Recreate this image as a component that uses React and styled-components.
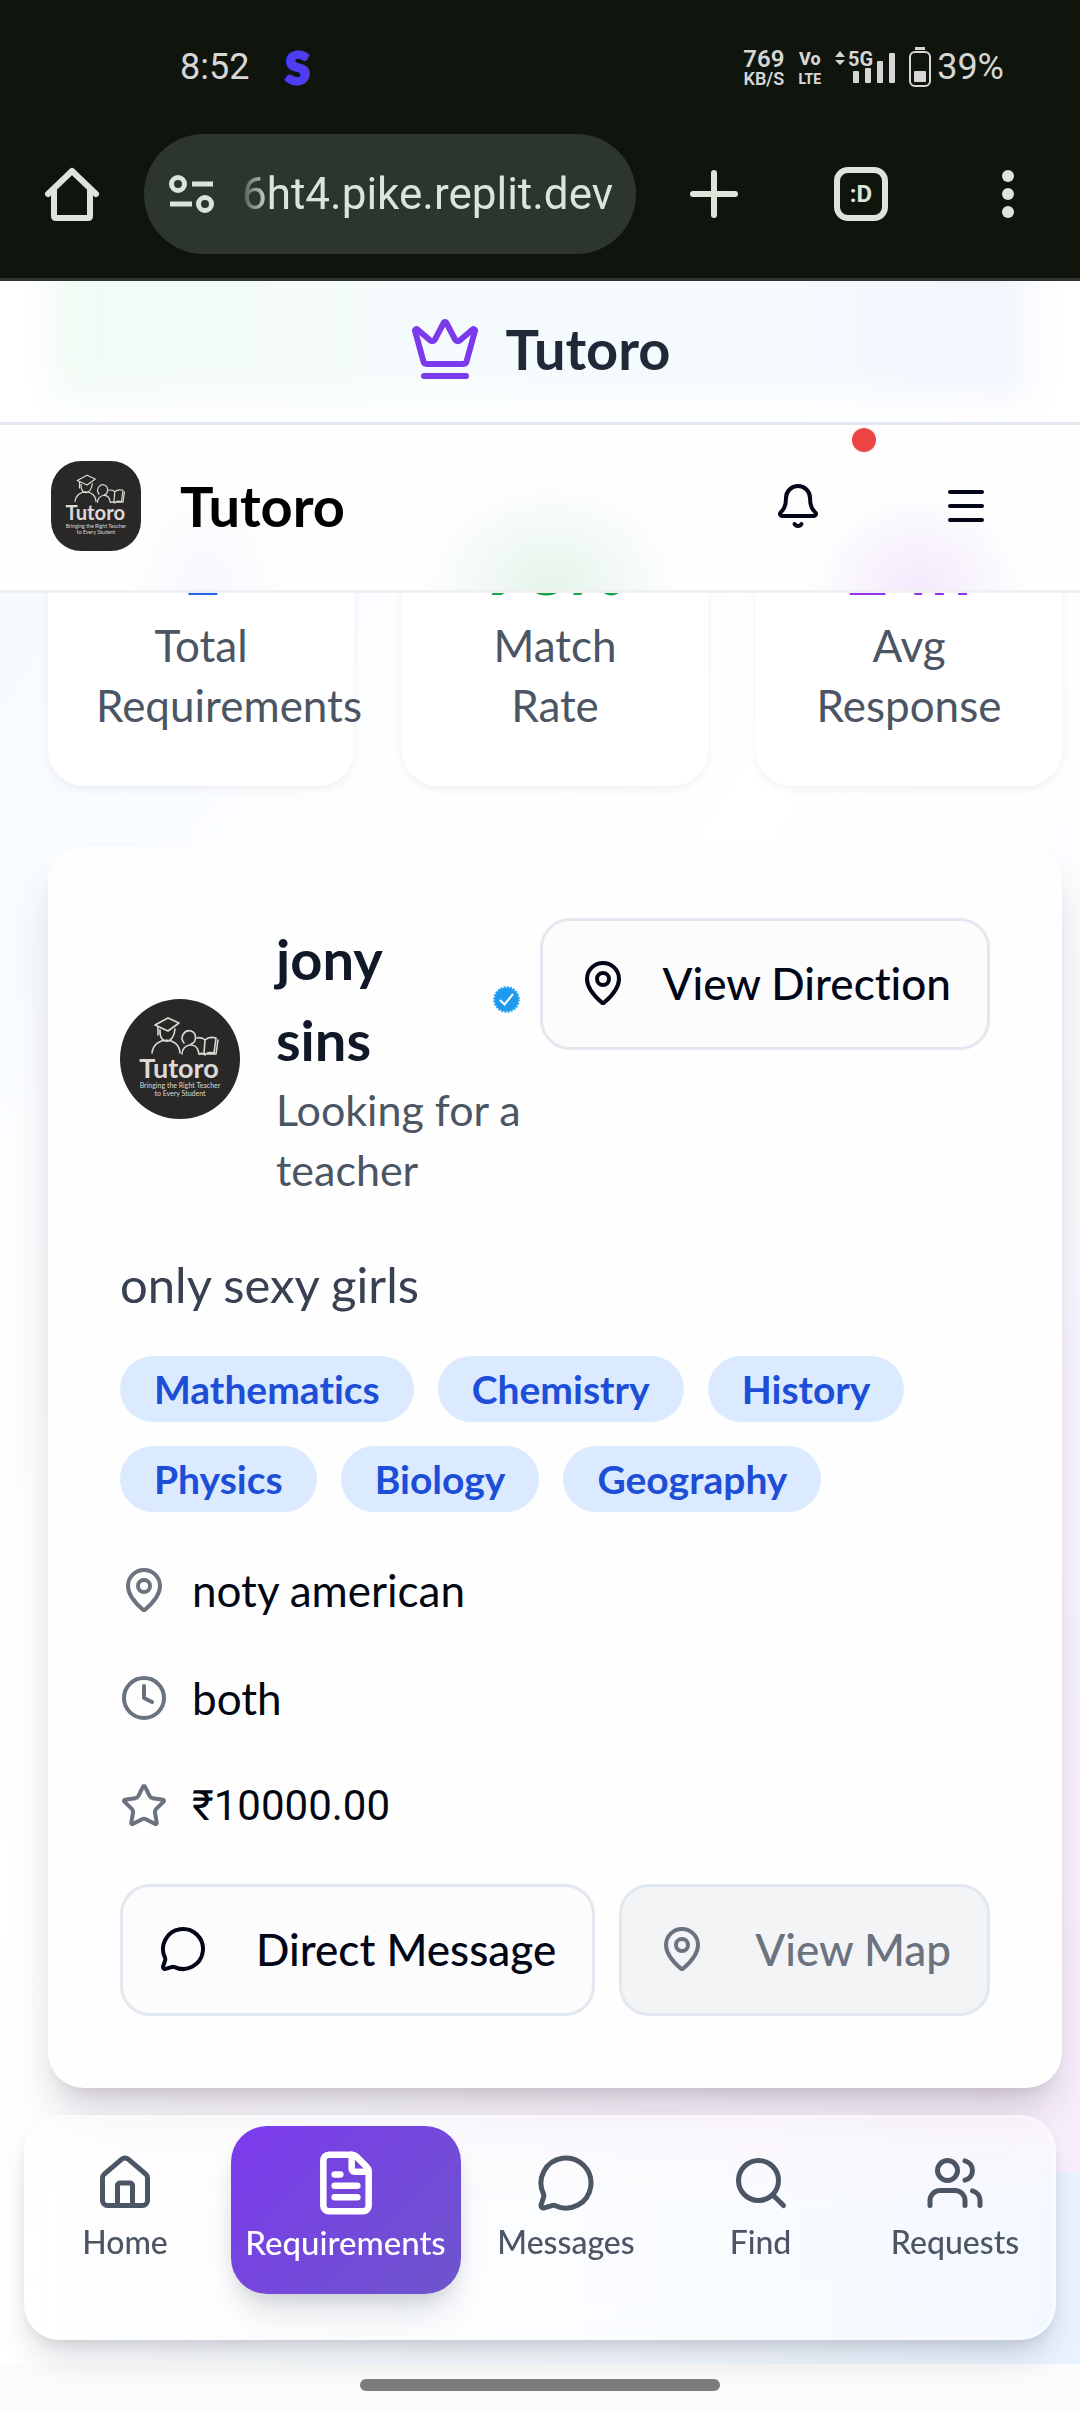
import React from "react";
import styled, { createGlobalStyle, css } from "styled-components";
import {
  Bell,
  Clock,
  Crown,
  FileText,
  House,
  MapPin,
  Menu,
  MessageCircle,
  Search,
  Star,
  Users,
} from "lucide-react";

const GlobalStyle = createGlobalStyle`
  *, *::before, *::after { box-sizing: border-box; }
  body { margin: 0; background: #fcfcfc; }
  button { font: inherit; color: inherit; background: none; border: 0; padding: 0; cursor: pointer; }
  h1, h2, p, ul, dl, dd, dt { margin: 0; padding: 0; }
  svg { display: block; flex: none; }
`;

const Screen = styled.div`
  font-family: Lato, "Open Sans", sans-serif;
  font-size: 43px;
  line-height: 60px;
  font-variant-ligatures: none;
  color: #030712;
  overflow: hidden;
`;

/* ---------- device chrome ---------- */

const Chrome = styled.div`
  background: #0f150d;
  border-bottom: 3px solid #2d342e;
  font-family: Roboto, sans-serif;
`;

const StatusBar = styled.div`
  display: flex;
  align-items: center;
  justify-content: space-between;
  height: 134px;
  padding: 0 76px 0 180px;
  color: #d6d6d6;
  font-size: 36px;
  line-height: 40px;
`;

const StatusGroup = styled.div`
  display: flex;
  align-items: center;
  gap: ${(p) => p.$gap}px;
`;

const AppMark = styled.span`
  font-family: Lato, sans-serif;
  font-weight: 900;
  font-size: 44px;
  color: #4f3df0;
  -webkit-text-stroke: 3px #4f3df0;
`;

const Stacked = styled.span`
  display: flex;
  flex-direction: column;
  align-items: center;
  padding-top: 4px;
  font-weight: ${(p) => p.$weight};
  font-size: ${(p) => p.$size}px;
  line-height: 20px;
  small { font-size: ${(p) => p.$small}px; }
`;

const Toolbar = styled.div`
  display: flex;
  align-items: center;
  padding: 0 36px 24px;
  color: #dbe5d9;
`;

const ChromeButton = styled.button`
  display: flex;
  align-items: center;
  justify-content: center;
  width: 72px;
  height: 72px;
  flex: none;
`;

const ChromeActions = styled.div`
  display: flex;
  gap: 75px;
`;

const AddressBar = styled.label`
  display: flex;
  align-items: center;
  gap: 26px;
  flex: 1;
  min-width: 0;
  height: 120px;
  margin: 0 42px 0 36px;
  padding: 0 12px 0 24px;
  border-radius: 60px;
  background: #2d362e;
`;

const AddressInput = styled.input`
  flex: 1;
  min-width: 0;
  border: 0;
  padding: 0;
  outline: 0;
  background: none;
  color: inherit;
  font: 44px/60px Roboto, sans-serif;
  mask-image: linear-gradient(90deg, rgba(0, 0, 0, 0.2), #000 28px);
`;

const TabCount = styled.span`
  display: flex;
  align-items: center;
  justify-content: center;
  width: 54px;
  height: 54px;
  border: 6px solid currentColor;
  border-radius: 14px;
  font-size: 24px;
  font-weight: 700;
`;

/* ---------- app headers ---------- */

const BrandBar = styled.header`
  position: relative;
  display: flex;
  align-items: center;
  justify-content: center;
  gap: 24px;
  height: 144px;
  padding-bottom: 6px;
  border-bottom: 3px solid #e2e8f0;
  background: #fff;
  overflow: hidden;
  color: #7c3aed;
  &::before {
    content: "";
    position: absolute;
    inset: -60px 52px 24px;
    background: linear-gradient(90deg, #f1fbf4, #f5fbfc 35%, #f5faff 75%, #f1f5fd);
    filter: blur(18px);
  }
  > * { position: relative; }
`;

const BrandName = styled.h1`
  font-size: 56px;
  line-height: 72px;
  font-weight: 700;
  color: ${(p) => p.$color};
`;

const AppBar = styled.header`
  position: relative;
  z-index: 2;
  display: flex;
  align-items: center;
  height: 168px;
  padding: 0 42px 4px 51px;
  border-bottom: 3px solid #eff0f2;
  background:
    radial-gradient(80px 110px at 19% 100%, rgba(37, 99, 235, 0.04), transparent),
    radial-gradient(130px 110px at 51% 100%, rgba(22, 163, 74, 0.11), transparent),
    radial-gradient(110px 100px at 85% 100%, rgba(147, 51, 234, 0.1), transparent),
    #fefefe;
  color: #020617;
  ${BrandName} { flex: 1; margin-left: 39px; }
`;

const AppBarButtons = styled.div`
  display: flex;
  gap: 24px;
`;

const IconButton = styled.button`
  position: relative;
  display: flex;
  align-items: center;
  justify-content: center;
  width: 144px;
  height: 144px;
`;

const Alert = styled.span`
  position: absolute;
  top: -6px;
  right: -6px;
  width: 24px;
  height: 24px;
  border-radius: 50%;
  background: #ef4444;
`;

const LogoBox = styled.span`
  flex: none;
  width: ${(p) => p.$size}px;
  height: ${(p) => p.$size}px;
  border-radius: ${(p) => p.$radius};
  overflow: hidden;
  svg { width: 100%; height: 100%; }
`;

/* ---------- content ---------- */

const Page = styled.div`
  background:
    linear-gradient(90deg, #ffffff 0%, #f6faff 60%, #e9f2ff 100%) bottom / 100% 192px no-repeat,
    linear-gradient(125deg, #f3faff 0%, #fbfdff 20%, #ffffff 42%, #fcfaff 62%, #f7ecfd 100%);
  padding-bottom: 24px;
`;

const Content = styled.main`
  padding: 0 18px 0 48px;
`;

const Stats = styled.dl`
  display: grid;
  grid-template-columns: repeat(3, minmax(0, 1fr));
  gap: 48px;
  margin-top: -125px;
`;

const StatCard = styled.div`
  display: flex;
  flex-direction: column-reverse;
  padding: 48px 45px;
  border: 3px solid #fff;
  border-radius: 36px;
  background: rgba(255, 255, 255, 0.9);
  box-shadow: 0 3px 9px rgba(15, 23, 42, 0.06);
  text-align: center;
  dt { color: #4b5563; font-size: 44px; }
  dd {
    font-size: 72px;
    line-height: 96px;
    font-weight: 700;
    color: ${(p) => p.$color};
  }
`;

const Card = styled.article`
  margin-top: 60px;
  padding: 72px;
  border-radius: 36px;
  background: #fefefe;
  box-shadow: 0 30px 45px -9px rgba(30, 10, 30, 0.18), 0 12px 18px -12px rgba(30, 10, 30, 0.14);
`;

const CardHead = styled.div`
  display: flex;
  align-items: flex-start;
  gap: 14px;
`;

const Person = styled.div`
  display: flex;
  align-items: center;
  gap: 36px;
  flex: 1;
  min-width: 0;
`;

const PersonText = styled.div`
  flex: 1;
  min-width: 0;
  color: #4b5563;
`;

const NameRow = styled.div`
  display: flex;
  align-items: center;
  gap: 24px;
  padding-right: 6px;
  h2 {
    flex: 1;
    font-size: 56px;
    line-height: 81px;
    font-weight: 700;
    color: #111827;
  }
`;

const Note = styled.p`
  margin-top: 48px;
  font-size: 49px;
  line-height: 72px;
  color: #374151;
`;

const Tags = styled.ul`
  display: flex;
  flex-wrap: wrap;
  gap: 24px;
  margin-top: 36px;
  list-style: none;
`;

const Tag = styled.li`
  padding: 9px 34px;
  border-radius: 33px;
  background: #dbeafe;
  color: #1d4ed8;
  font-size: 39px;
  line-height: 48px;
  font-weight: 700;
`;

const Facts = styled.ul`
  display: flex;
  flex-direction: column;
  gap: 48px;
  margin: 48px 0;
  list-style: none;
  font-size: 44px;
`;

const Fact = styled.li`
  display: flex;
  align-items: center;
  gap: 24px;
  svg { color: #6b7280; }
  ${(p) => p.$numeric && css`font-family: Roboto, sans-serif; font-size: 42px;`}
`;

const ActionRow = styled.div`
  display: flex;
  gap: 24px;
`;

const OutlineButton = styled.button`
  display: flex;
  align-items: center;
  justify-content: space-between;
  gap: ${(p) => p.$gap || 36}px;
  flex: ${(p) => (p.$grow ? "1 1 auto" : "none")};
  height: 132px;
  padding: 0 36px 2px;
  border: 3px solid #e2e8f0;
  border-radius: 30px;
  background: #fcfcfd;
  color: #020617;
  font-weight: 500;
  font-size: 44px;
  white-space: nowrap;
  &:disabled { background: #f3f4f6; color: #6b7280; cursor: default; }
`;

/* ---------- bottom navigation ---------- */

const BottomNav = styled.nav`
  display: flex;
  justify-content: space-between;
  height: 225px;
  margin: 27px 24px 0;
  padding: 8px 9px;
  border: 3px solid rgba(255, 255, 255, 0.3);
  border-radius: 36px;
  background: rgba(255, 255, 255, 0.45);
  backdrop-filter: blur(24px);
  box-shadow: 0 24px 36px -9px rgba(15, 23, 42, 0.16), 0 6px 15px -3px rgba(15, 23, 42, 0.1);
`;

const NavItem = styled.a`
  display: flex;
  flex-direction: column;
  align-items: center;
  min-width: ${(p) => (p.$active ? 230 : 178)}px;
  height: 168px;
  padding-top: 22px;
  border-radius: 36px;
  color: #4b5563;
  font-size: 32px;
  line-height: 48px;
  font-weight: 500;
  text-decoration: none;
  ${(p) => p.$active && css`
    color: #fff;
    font-size: 33px;
    background: linear-gradient(135deg, #7c3aed, #6d55cc);
    box-shadow: 0 24px 36px -9px rgba(15, 23, 42, 0.14), 0 9px 18px -6px rgba(15, 23, 42, 0.12);
  `}
`;

const NavIcon = styled.span`
  display: flex;
  align-items: center;
  height: 70px;
`;

const GestureBar = styled.footer`
  display: flex;
  align-items: center;
  justify-content: center;
  height: 48px;
  padding-bottom: 6px;
  background: #fcfcfc;
  &::before {
    content: "";
    width: 360px;
    height: 12px;
    border-radius: 6px;
    background: #7d7d7d;
  }
`;

/* ---------- drawings ---------- */

const TutoroLogo = () => (
  <svg viewBox="0 0 120 120" role="img" aria-label="Tutoro logo">
    <rect width="120" height="120" fill="#292827" />
    <g fill="none" stroke="#dcdad6" strokeWidth="1.6" strokeLinejoin="round" strokeLinecap="round">
      <path d="M35 26l13-7 11 5-11 8z" />
      <path d="M38 28v8M40 31c-1 15 14 15 15-1" />
      <path d="M32 54c2-17 27-17 28 0" />
      <path d="M64 44c-5-6 1-14 7-12 6 2 6 11 0 13" />
      <path d="M62 55c0-10 15-14 17 0" />
      <path d="M77 39c4-1 6 0 8 2 3-3 7-3 11-2l-2 15c-4-1-8 0-9 2-2-2-4-2-6-1M85 41l-1 13M98 41l-2 14H81" />
    </g>
    <g fill="#dcdad6" textAnchor="middle" fontFamily="Lato, sans-serif">
      <text x="59" y="79" fontSize="27" fontWeight="700">Tutoro</text>
      <text x="60" y="89" fontSize="7">Bringing the Right Teacher</text>
      <text x="60" y="97" fontSize="7">to Every Student</text>
    </g>
  </svg>
);

const HomeOutline = () => (
  <svg width="60" height="60" viewBox="0 0 60 60" fill="none" stroke="currentColor" strokeWidth="6" strokeLinecap="round" strokeLinejoin="round">
    <path d="M6 30L30 7l24 23M12 26v26q0 2 2 2h32q2 0 2-2V26" />
  </svg>
);

const TuneIcon = () => (
  <svg width="48" height="48" viewBox="0 0 48 48" fill="none" stroke="currentColor" strokeWidth="5">
    <circle cx="10" cy="14" r="6.5" />
    <path d="M24 14h21M2 34h22" />
    <circle cx="37" cy="34" r="6.5" />
  </svg>
);

const PlusIcon = () => (
  <svg width="48" height="48" viewBox="0 0 48 48" stroke="currentColor" strokeWidth="6" strokeLinecap="round">
    <path d="M24 3v42M3 24h42" />
  </svg>
);

const DotsIcon = () => (
  <svg width="12" height="48" viewBox="0 0 12 48" fill="currentColor">
    <circle cx="6" cy="6" r="6" />
    <circle cx="6" cy="24" r="6" />
    <circle cx="6" cy="42" r="6" />
  </svg>
);

const SignalIcon = () => (
  <svg width="60" height="40" viewBox="0 0 60 40" fill="currentColor">
    <path d="M0 10l5-6 5 6zM0 13h10l-5 5z" />
    <text x="13" y="19" fontSize="20" fontWeight="700" fontFamily="Roboto, sans-serif">5G</text>
    <rect x="18" y="24" width="6" height="12" rx="1" />
    <rect x="30" y="21" width="6" height="15" rx="1" />
    <rect x="42" y="14" width="6" height="22" rx="1" />
    <rect x="54" y="6" width="6" height="30" rx="1" />
  </svg>
);

const BatteryIcon = () => (
  <svg width="22" height="40" viewBox="0 0 22 40" fill="currentColor">
    <rect x="6" y="0" width="10" height="3" />
    <rect x="1" y="5" width="20" height="34" rx="5" fill="none" stroke="currentColor" strokeWidth="2" />
    <rect x="5" y="24" width="12" height="11" rx="1" />
  </svg>
);

const VerifiedIcon = () => (
  <svg width="27" height="27" viewBox="0 0 27 27" role="img" aria-label="Verified">
    <circle cx="13.5" cy="13.5" r="12" fill="#1d9bf0" />
    <circle cx="13.5" cy="13.5" r="12.5" fill="none" stroke="#1d9bf0" strokeWidth="1.6" strokeDasharray="2 1.27" />
    <path d="M7 14l4.500 4.500L20 8" fill="none" stroke="#fff" strokeWidth="2" />
  </svg>
);

/* ---------- data ---------- */

const stats = [
  { label: "Total Requirements", value: "1", color: "#2563eb" },
  { label: "Match Rate", value: "98%", color: "#16a34a" },
  { label: "Avg Response", value: "24h", color: "#9333ea" },
];

const subjects = ["Mathematics", "Chemistry", "History", "Physics", "Biology", "Geography"];

const tabs = [
  { label: "Home", Icon: House },
  { label: "Requirements", Icon: FileText, active: true },
  { label: "Messages", Icon: MessageCircle },
  { label: "Find", Icon: Search },
  { label: "Requests", Icon: Users },
];

export default function App() {
  return (
    <Screen>
      <GlobalStyle />
      <Chrome>
        <StatusBar>
          <StatusGroup $gap={36}>
            <span>8:52</span>
            <AppMark>S</AppMark>
          </StatusGroup>
          <StatusGroup $gap={14}>
            <Stacked $size={24} $small={18} $weight={600}>
              769<small>KB/S</small>
            </Stacked>
            <Stacked $size={18} $small={14} $weight={800}>
              Vo<small>LTE</small>
            </Stacked>
            <SignalIcon />
            <StatusGroup $gap={6}>
              <BatteryIcon />
              <span>39%</span>
            </StatusGroup>
          </StatusGroup>
        </StatusBar>
        <Toolbar>
          <ChromeButton aria-label="Home page"><HomeOutline /></ChromeButton>
          <AddressBar>
            <TuneIcon />
            <AddressInput aria-label="Address" defaultValue="6ht4.pike.replit.dev" />
          </AddressBar>
          <ChromeActions>
            <ChromeButton aria-label="New tab"><PlusIcon /></ChromeButton>
            <ChromeButton aria-label="Tabs"><TabCount>:D</TabCount></ChromeButton>
            <ChromeButton aria-label="More"><DotsIcon /></ChromeButton>
          </ChromeActions>
        </Toolbar>
      </Chrome>

      <BrandBar>
        <Crown size={72} />
        <BrandName $color="#1f2937">Tutoro</BrandName>
      </BrandBar>

      <AppBar>
        <LogoBox $size={90} $radius="30px"><TutoroLogo /></LogoBox>
        <BrandName as="h2" $color="#000">Tutoro</BrandName>
        <AppBarButtons>
          <IconButton aria-label="Notifications">
            <Bell size={48} />
            <Alert />
          </IconButton>
          <IconButton aria-label="Menu"><Menu size={48} /></IconButton>
        </AppBarButtons>
      </AppBar>

      <Page>
        <Content>
          <Stats>
            {stats.map((s) => (
              <StatCard key={s.label} $color={s.color}>
                <dt>{s.label}</dt>
                <dd>{s.value}</dd>
              </StatCard>
            ))}
          </Stats>

          <Card>
            <CardHead>
              <Person>
                <LogoBox $size={120} $radius="50%"><TutoroLogo /></LogoBox>
                <PersonText>
                  <NameRow>
                    <h2>jony sins</h2>
                    <VerifiedIcon />
                  </NameRow>
                  <p>Looking for a teacher</p>
                </PersonText>
              </Person>
              <OutlineButton><MapPin size={48} />View Direction</OutlineButton>
            </CardHead>

            <Note>only sexy girls</Note>

            <Tags>
              {subjects.map((s) => <Tag key={s}>{s}</Tag>)}
            </Tags>

            <Facts>
              <Fact><MapPin size={48} />noty american</Fact>
              <Fact><Clock size={48} />both</Fact>
              <Fact $numeric><Star size={48} />₹10000.00</Fact>
            </Facts>

            <ActionRow>
              <OutlineButton $grow $gap={48}><MessageCircle size={48} />Direct Message</OutlineButton>
              <OutlineButton $grow $gap={48} disabled><MapPin size={48} />View Map</OutlineButton>
            </ActionRow>
          </Card>
        </Content>

        <BottomNav>
          {tabs.map(({ label, Icon, active }) => (
            <NavItem key={label} href="#" $active={active} aria-current={active ? "page" : undefined}>
              <NavIcon><Icon size={active ? 68 : 60} strokeWidth={active ? 2.3 : 2} /></NavIcon>
              {label}
            </NavItem>
          ))}
        </BottomNav>
      </Page>
      <GestureBar />
    </Screen>
  );
}
